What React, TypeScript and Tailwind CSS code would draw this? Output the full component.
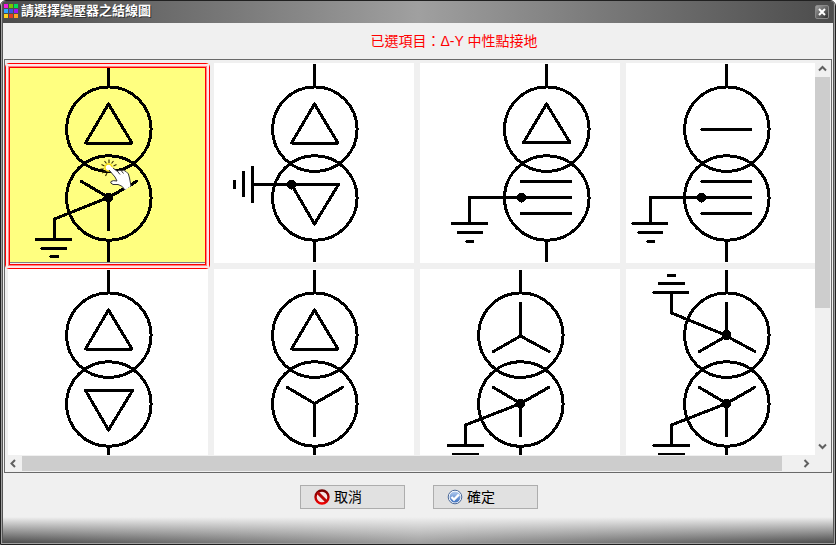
import type { ReactNode } from "react";

const FONT = "font-['Liberation_Sans','Noto_Sans_CJK_TC',sans-serif]";

function Dot({ x, y }: { x: number; y: number }) {
  return <circle cx={x} cy={y} r="5" fill="#000" stroke="none" />;
}

/** Two overlapping windings with the leads above and below. */
function Transformer({ cx = 100.5, children }: { cx?: number; children: ReactNode }) {
  return (
    <svg
      viewBox="0 0 200 200"
      className="block size-full"
      fill="none"
      stroke="#000"
      strokeWidth="3"
      strokeLinecap="round"
      strokeLinejoin="round"
      shapeRendering="crispEdges"
      aria-hidden="true"
    >
      <path d={`M${cx} 2.5V23M${cx} 178V198`} />
      <circle cx={cx + 0.3} cy="66.2" r="42.3" />
      <circle cx={cx + 0.3} cy="135" r="42.3" />
      {children}
    </svg>
  );
}

const DELTA = "M100.5 41L77.5 80H124Z";
const DELTA_DOWN = "M100.5 161L77.5 121.5H124.5Z";
const WYE_TOP = "M100.5 67V34.5M100.5 67L73.5 82.5M100.5 67L129 82.5";
const WYE_BOTTOM = "M100.5 134.5V167M100.5 134.5L73.5 118.5M100.5 134.5L128.5 118.5";
const GROUND_LOW = "M100.5 134.5L46.5 156V176.5M28.5 176.5H63M34 185.5H58M43 193.5H50";

const ITEMS: { name: string; figure: ReactNode }[] = [
  {
    name: "Δ-Y 中性點接地",
    figure: (
      <Transformer>
        <path d={DELTA} />
        <path d={WYE_BOTTOM} />
        <path d={GROUND_LOW} />
        <Dot x={100.5} y={134.5} />
      </Transformer>
    ),
  },
  {
    name: "Δ-Δ 接地",
    figure: (
      <Transformer>
        <path d={DELTA} />
        <path d={DELTA_DOWN} />
        <path d="M78 121.5H38.5M38.5 104V138.5M29.5 109V132.5M20.5 118.5V124.5" />
        <Dot x={77.5} y={121.5} />
      </Transformer>
    ),
  },
  {
    name: "Δ-三線接地",
    figure: (
      <Transformer cx={126.5}>
        <path d="M126.5 41L103.5 79.5H150Z" />
        <path d="M101.5 118.5H151M101.5 134.5H151M101.5 150.5H151" />
        <path d="M101.5 134.5H49.5V160.5M32.500 160.5H66.500M38.500 169.5H61.500M47 178.5H52.500" />
        <Dot x={101.5} y={134.5} />
      </Transformer>
    ),
  },
  {
    name: "單線-三線接地",
    figure: (
      <Transformer>
        <path d="M76 66.5H125M76 118.5H125M76 134.5H125M76 150.5H125" />
        <path d="M76 134.5H24.5V160.5M7 160.5H41M13 169.5H35.500M22 178.5H27.5" />
        <Dot x={75.5} y={134.5} />
      </Transformer>
    ),
  },
  {
    name: "Δ-Δ",
    figure: (
      <Transformer>
        <path d={DELTA} />
        <path d={DELTA_DOWN} />
      </Transformer>
    ),
  },
  {
    name: "Δ-Y",
    figure: (
      <Transformer>
        <path d={DELTA} />
        <path d={WYE_BOTTOM} />
      </Transformer>
    ),
  },
  {
    name: "Y-Y 中性點接地",
    figure: (
      <Transformer>
        <path d={WYE_TOP} />
        <path d={WYE_BOTTOM} />
        <path d="M100.5 134.5L45.5 156V176.5M28.5 176.5H63M33.5 185.5H57.500" />
        <Dot x={100.5} y={134.5} />
      </Transformer>
    ),
  },
  {
    name: "Y-Y 兩側中性點接地",
    figure: (
      <Transformer>
        <path d={WYE_TOP} />
        <path d={WYE_BOTTOM} />
        <path d="M100.5 134.5L45.5 156V176.5M28 176.5H62.500M33.5 185.5H57.500" />
        <path d="M100.5 66.5L45.5 44V23.5M28 23.5H62M33.5 14.5H57.5M42.5 6.5H48.5" />
        <Dot x={100.5} y={66} />
        <Dot x={100.5} y={134.5} />
      </Transformer>
    ),
  },
];

function HandPointer() {
  return (
    <svg viewBox="0 0 32 32" className="absolute top-24 left-23 size-8" aria-hidden="true">
      <path
        d="M9 0.500V4M4.500 2L6.500 4.500M13.500 2L11.500 4.500M1.500 5.500L4.500 7M16.500 5.500L13.500 7M0.500 10H4M2 14L5 12.500M5.500 17L7 14"
        stroke="#3a3000"
        strokeWidth="1.200"
      />
      <circle cx="8.500" cy="8.500" r="3.500" fill="#fff" stroke="#f4dc14" strokeWidth="1.500" />
      <path
        d="M9 8.500Q11 7 13 9L17.500 12.500Q19 10.500 21 11.500Q24 10.500 26 12.500Q29 14 29.500 19L31 27L25 31Q22 26 18 25.500L13 25.500Q9.500 24 11 22.500Q13 21 17 22L15 18L9 11Q8 9.500 9 8.500Z"
        fill="#fff"
      />
      <path
        d="M13 9L17.500 12.500Q19 10.500 21 11.500Q24 10.500 26 12.500Q29 14 29.500 19L31 27M25 31Q22 26 18 25.500L13 25.500Q9.500 24 11 22.500Q13 21 17 22L15 18L9 11M18 13L20 15.500M21.500 12L23.500 14.500"
        fill="none"
        stroke="#333"
      />
    </svg>
  );
}

function SelectionFrame() {
  return (
    <>
      <span className="absolute top-0 -right-[2px] -bottom-[6px] -left-[3px] rounded-sm border border-[#ff0000]">
        <span className="block size-full border-2 border-[#ffe6e6]">
          <span className="block size-full border border-[#ff8080]">
            <span className="block size-full border border-[#ff0000]" />
          </span>
        </span>
      </span>
      <span className="absolute right-[3px] bottom-0 left-[2px] h-px bg-[#808080]" />
    </>
  );
}

function Chevron({ d }: { d: string }) {
  return (
    <svg viewBox="0 0 9 9" className="size-[9px]" fill="none" stroke="#606060" strokeWidth="2" aria-hidden="true">
      <path d={d} />
    </svg>
  );
}

const SWATCHES = [
  "bg-[#f01ce0]",
  "bg-[#78c800]",
  "bg-[#00e05a]",
  "bg-[#32a8ff]",
  "bg-[#3858e0]",
  "bg-[#a010f8]",
  "bg-[#ffd21c]",
  "bg-[#e03828]",
  "bg-[#ffa020]",
];

function TitleBar() {
  return (
    <header className="flex h-[22px] shrink-0 items-center bg-linear-to-r from-[#4c4c4c] via-[#a0a0a0] to-[#4c4c4c] pr-1 pb-0.5 pl-px">
      <span className="grid grid-cols-3 gap-px">
        {SWATCHES.map((c) => (
          <span key={c} className={`size-1 ${c}`} />
        ))}
      </span>
      <h1 className="ml-[3px] flex-1 text-[13px] leading-5 font-bold text-white [text-shadow:1px_1px_0_#333]">
        請選擇變壓器之結線圖
      </h1>
      <button
        type="button"
        aria-label="關閉"
        className="mt-0.5 flex size-[14px] items-center justify-center rounded-xs border border-[#8a8a8a] bg-linear-to-br from-[#a0a0a0] to-[#303030]"
      >
        <svg viewBox="0 0 8 8" className="size-2" stroke="#fff" strokeWidth="2" aria-hidden="true">
          <path d="M1 1L7 7M7 1L1 7" />
        </svg>
      </button>
    </header>
  );
}

function CancelIcon() {
  return (
    <svg viewBox="0 0 16 16" className="size-4" aria-hidden="true">
      <defs>
        <linearGradient id="ban" x1="0" y1="0" x2="0" y2="1">
          <stop offset="0" stopColor="#700000" />
          <stop offset="1" stopColor="#f00000" />
        </linearGradient>
      </defs>
      <circle cx="8" cy="8" r="6.500" fill="#f4e4e4" stroke="url(#ban)" strokeWidth="2.400" />
      <path d="M3.500 3.500L12.500 12.500" stroke="#b80808" strokeWidth="3" />
    </svg>
  );
}

function ConfirmIcon() {
  return (
    <svg viewBox="0 0 16 16" className="size-4" aria-hidden="true">
      <defs>
        <linearGradient id="ok" x1="0" y1="0" x2="0" y2="1">
          <stop offset="0" stopColor="#b4cdf0" />
          <stop offset="1" stopColor="#3c70c0" />
        </linearGradient>
      </defs>
      <circle cx="8" cy="8" r="6.800" fill="#fff" stroke="#4a6898" />
      <circle cx="8" cy="8" r="5.500" fill="url(#ok)" />
      <path d="M4.500 8L7 10.500L12 5.500" fill="none" stroke="#fff" strokeWidth="2.400" />
    </svg>
  );
}

function ActionButton({ icon, children }: { icon: ReactNode; children: ReactNode }) {
  return (
    <button
      type="button"
      className="flex h-6 w-[105px] items-center gap-1 border border-[#adadad] bg-[#e1e1e1] pl-[13px] text-sm leading-5 text-black"
    >
      {icon}
      <span>{children}</span>
    </button>
  );
}

const SCROLL_BUTTON = "flex shrink-0 items-center justify-center";

export default function App() {
  return (
    <div lang="zh-Hant" className={`h-screen bg-white ${FONT}`}>
      <div className="h-full overflow-hidden rounded-t-md border border-[#202020]">
        <div className="flex h-full flex-col border-x border-b border-[#a0a0a0]">
          <div className="flex min-h-0 flex-1 flex-col border-x border-[#555]">
            <TitleBar />
            <main className="flex min-h-0 flex-1 flex-col bg-[#f0f0f0] px-px">
              <p className="flex h-9 shrink-0 items-center justify-center pl-18 text-sm text-[#ff0000]">
                已選項目：Δ-Y 中性點接地
              </p>

              <section className="flex min-h-0 flex-1 flex-col border border-[#696969]">
                <div className="flex min-h-0 flex-1">
                  <div className="min-w-0 flex-1 overflow-hidden pt-[3px] pl-[3px]">
                    <div className="grid w-max grid-cols-[repeat(4,200px)] gap-[6px]">
                      {ITEMS.map((item, i) => (
                        <button
                          key={item.name}
                          type="button"
                          aria-label={item.name}
                          aria-pressed={i === 0}
                          className={`relative size-[200px] ${i === 0 ? "z-10 bg-[#ffff80]" : "bg-white"}`}
                        >
                          {item.figure}
                          {i === 0 && (
                            <>
                              <SelectionFrame />
                              <HandPointer />
                            </>
                          )}
                        </button>
                      ))}
                    </div>
                  </div>
                  <div className="flex w-4 shrink-0 flex-col pr-px">
                    <span className={`${SCROLL_BUTTON} h-[17px]`}>
                      <Chevron d="M1 6.500L4.500 3L8 6.500" />
                    </span>
                    <span className="flex-1">
                      <span className="block h-[64%] bg-[#cdcdcd]" />
                    </span>
                    <span className={`${SCROLL_BUTTON} h-[17px]`}>
                      <Chevron d="M1 2.500L4.500 6L8 2.500" />
                    </span>
                  </div>
                </div>
                <div className="flex h-[17px] shrink-0 py-px pr-4">
                  <span className={`${SCROLL_BUTTON} w-[17px]`}>
                    <Chevron d="M6 1L2.500 4.500L6 8" />
                  </span>
                  <span className="flex-1">
                    <span className="block h-full w-[98%] bg-[#cdcdcd]" />
                  </span>
                  <span className={`${SCROLL_BUTTON} w-[17px]`}>
                    <Chevron d="M2.500 1L6 4.500L2.500 8" />
                  </span>
                </div>
              </section>

              <div className="flex shrink-0 justify-center gap-7 pt-3 pb-2 pl-0.5">
                <ActionButton icon={<CancelIcon />}>取消</ActionButton>
                <ActionButton icon={<ConfirmIcon />}>確定</ActionButton>
              </div>
            </main>
            <footer className="h-[26px] shrink-0 bg-linear-to-r from-[#4c4c4c] via-[#a0a0a0] to-[#4c4c4c]">
              <div className="h-full bg-linear-to-b from-[#f0f0f0] to-transparent" />
            </footer>
          </div>
        </div>
      </div>
    </div>
  );
}
